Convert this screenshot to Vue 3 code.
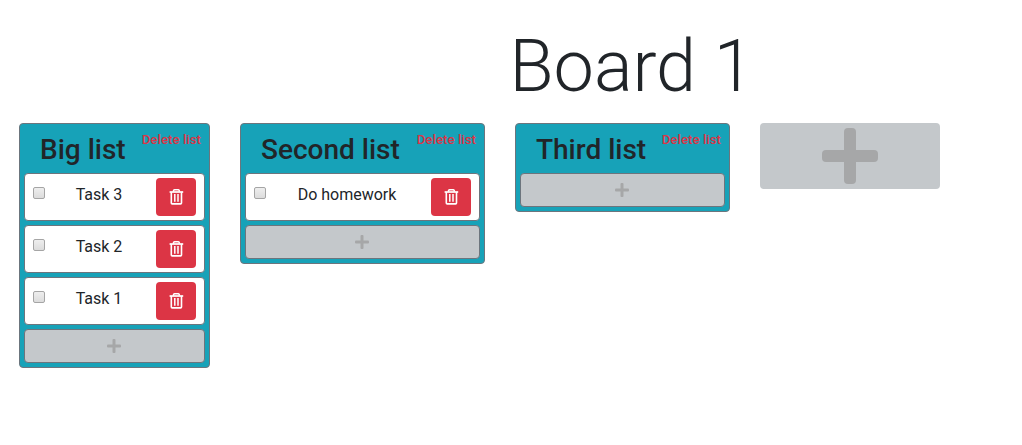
<script setup>
const lists = [
  { id: 'big', title: 'Big list', tasks: ['Task 3', 'Task 2', 'Task 1'] },
  { id: 'second', title: 'Second list', tasks: ['Do homework'] },
  { id: 'third', title: 'Third list', tasks: [] },
]
</script>

<template>
  <main class="board">
    <h1 class="board-title">Board 1</h1>
    <div class="lists">
      <section v-for="list in lists" :key="list.id" class="list" :class="list.id">
        <header class="list-header">
          <h3 class="list-title">{{ list.title }}</h3>
          <a class="delete-list">Delete list</a>
        </header>
        <div class="items">
          <div v-for="task in list.tasks" :key="task" class="task">
            <input type="checkbox" class="check" />
            <span class="task-name">{{ task }}</span>
            <button class="trash" aria-label="Delete task">
              <svg width="16" height="18" viewBox="-0.4 0 16 18" fill="none" stroke="#fff">
                <path d="M1.2 4H14.8" stroke-width="1.7" />
                <path d="M4.8 3.6L5.4 2.1Q5.6 1.7 6.1 1.7H9.9Q10.4 1.7 10.6 2.1L11.2 3.6" stroke-width="1.5" />
                <path d="M2.9 4V15Q2.9 15.9 3.8 15.9H12.2Q13.1 15.9 13.1 15V4" stroke-width="1.6" />
                <path d="M6.4 6V13.8M9.6 6V13.8" stroke-width="1.5" />
              </svg>
            </button>
          </div>
          <button class="add" aria-label="Add task">
            <svg width="14" height="14" viewBox="0 0 56 56" fill="#a6a7a8">
              <rect x="22" width="12" height="56" rx="4" />
              <rect y="22" width="56" height="12" rx="4" />
            </svg>
          </button>
        </div>
      </section>
      <button class="add-list" aria-label="Add list">
        <svg width="56" height="56" viewBox="0 0 56 56" fill="#a6a7a8">
          <rect x="22" width="12" height="56" rx="4" />
          <rect y="22" width="56" height="12" rx="4" />
        </svg>
      </button>
    </div>
  </main>
</template>

<style>
body {
  background: #fff;
}
</style>

<style scoped>
.board,
.board * {
  box-sizing: border-box;
}
.board {
  padding-top: 24px;
  font-family: Roboto, "Liberation Sans", sans-serif;
  font-size: 16px;
  line-height: 1.5;
  color: #212529;
}
.board-title {
  margin: 0 0 13px;
  padding-left: 241px;
  font-size: 72px;
  font-weight: 300;
  line-height: 86px;
  text-align: center;
}
.lists {
  display: flex;
  align-items: flex-start;
  gap: 30px;
  padding-left: 19px;
}
.list {
  flex: none;
  padding: 0 4px 4px;
  border: 1px solid #6c757d;
  border-radius: 4px;
  background: #17a2b8;
}
.big { width: 191px; }
.second { width: 245px; }
.third { width: 215px; }
.list-header {
  display: flex;
  justify-content: space-between;
  height: 49px;
  padding: 8px 4px 0 16px;
}
.list-title {
  margin: 1px 0 0;
  font-size: 28px;
  font-weight: 500;
  line-height: 34px;
  white-space: nowrap;
}
.delete-list {
  font-size: 13.333px;
  font-weight: 500;
  line-height: 16px;
  white-space: nowrap;
  color: #dc3545;
}
.items {
  display: flex;
  flex-direction: column;
  gap: 4px;
}
.task {
  display: flex;
  align-items: flex-start;
  height: 48px;
  padding: 4px 8px;
  border: 1px solid #6c757d;
  border-radius: 4px;
  background: #fff;
}
.check {
  appearance: none;
  width: 12px;
  height: 12px;
  margin: 9px 0 0;
  border: 1px solid #a5a5a5;
  border-radius: 2px;
  background: linear-gradient(#eee, #dcdcdc);
}
.task-name {
  flex: 1;
  padding: 5px 3px 0 0;
  text-align: center;
}
.trash {
  display: flex;
  align-items: center;
  justify-content: center;
  width: 40px;
  height: 38px;
  padding: 0;
  border: 0;
  border-radius: 4px;
  background: #dc3545;
}
.add,
.add-list {
  display: flex;
  align-items: center;
  justify-content: center;
  padding: 0;
  border: 0;
  border-radius: 4px;
  background: #c4c8cb;
}
.add {
  height: 34px;
  padding: 0 1px 1px 0;
  border: 1px solid #6c757d;
}
.add-list {
  width: 180px;
  height: 66px;
}
</style>
